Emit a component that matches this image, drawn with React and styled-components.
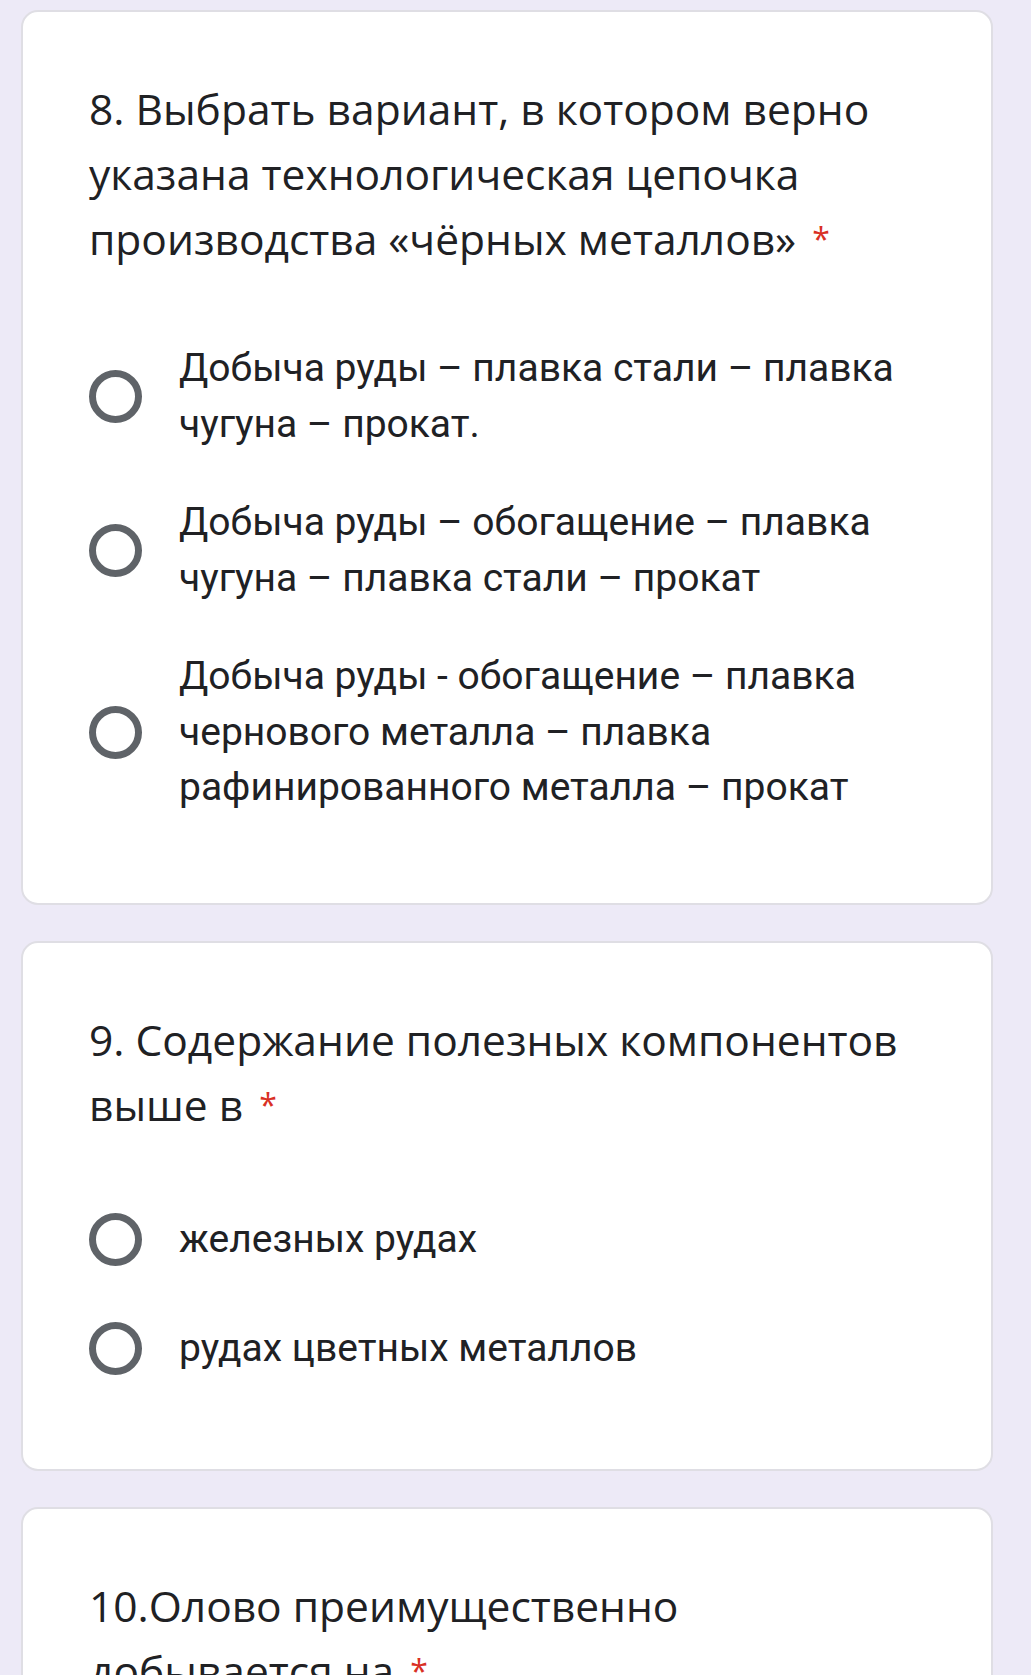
import React from 'react';
import styled, { createGlobalStyle } from 'styled-components';

const GlobalStyle = createGlobalStyle`
  html, body {
    margin: 0;
    padding: 0;
    background: #edeaf7;
  }
  body {
    font-family: Roboto, "Noto Sans", sans-serif;
    color: #202124;
  }
`;

const Page = styled.main`
  display: flex;
  flex-direction: column;
  gap: 36px;
  width: 993px;
  padding: 10px 0 0 21px;
  height: 1675px;
  overflow: hidden;
  box-sizing: border-box;
`;

const Card = styled.section`
  flex: 0 0 auto;
  background: #fff;
  border: 2px solid #dfdee4;
  border-radius: 17px;
  padding: 64px 66px 87px 66px;
  display: flex;
  flex-direction: column;
  gap: 70px;
`;

const Title = styled.h2`
  margin: 0;
  font-family: "Open Sans", "Noto Sans", sans-serif;
  font-weight: 400;
  font-size: 42.5px;
  line-height: 65px;
  color: #202124;
`;

const Required = styled.span`
  color: #d93025;
  font-size: 32px;
  margin-left: 16px;
  vertical-align: 4px;
`;

const Options = styled.div`
  display: flex;
  flex-direction: column;
  gap: 43px;
`;

const OptionRow = styled.label`
  display: flex;
  align-items: center;
  gap: 37px;
  min-height: 66px;
`;

const Radio = styled.span`
  flex: 0 0 auto;
  width: 53px;
  height: 53px;
  box-sizing: border-box;
  border: 7px solid #5f6368;
  border-radius: 50%;
`;

const OptionText = styled.span`
  font-family: Roboto, sans-serif;
  font-size: 39px;
  line-height: 55.5px;
  color: #202124;
`;

const questions = [
  {
    title: '8. Выбрать вариант, в котором верно указана технологическая цепочка производства «чёрных металлов»',
    options: [
      'Добыча руды – плавка стали – плавка чугуна – прокат.',
      'Добыча руды – обогащение – плавка чугуна – плавка стали – прокат',
      'Добыча руды - обогащение – плавка чернового металла – плавка рафинированного металла – прокат',
    ],
  },
  {
    title: '9. Содержание полезных компонентов выше в',
    options: ['железных рудах', 'рудах цветных металлов'],
  },
  {
    title: '10.Олово преимущественно добывается на',
    options: ['россыпных месторождениях', 'коренных месторождениях'],
  },
];

export default function App() {
  return (
    <>
      <GlobalStyle />
      <Page>
        {questions.map((q) => (
          <Card key={q.title}>
            <Title>
              {q.title}
              <Required>*</Required>
            </Title>
            <Options>
              {q.options.map((o) => (
                <OptionRow key={o}>
                  <Radio />
                  <OptionText>{o}</OptionText>
                </OptionRow>
              ))}
            </Options>
          </Card>
        ))}
      </Page>
    </>
  );
}
